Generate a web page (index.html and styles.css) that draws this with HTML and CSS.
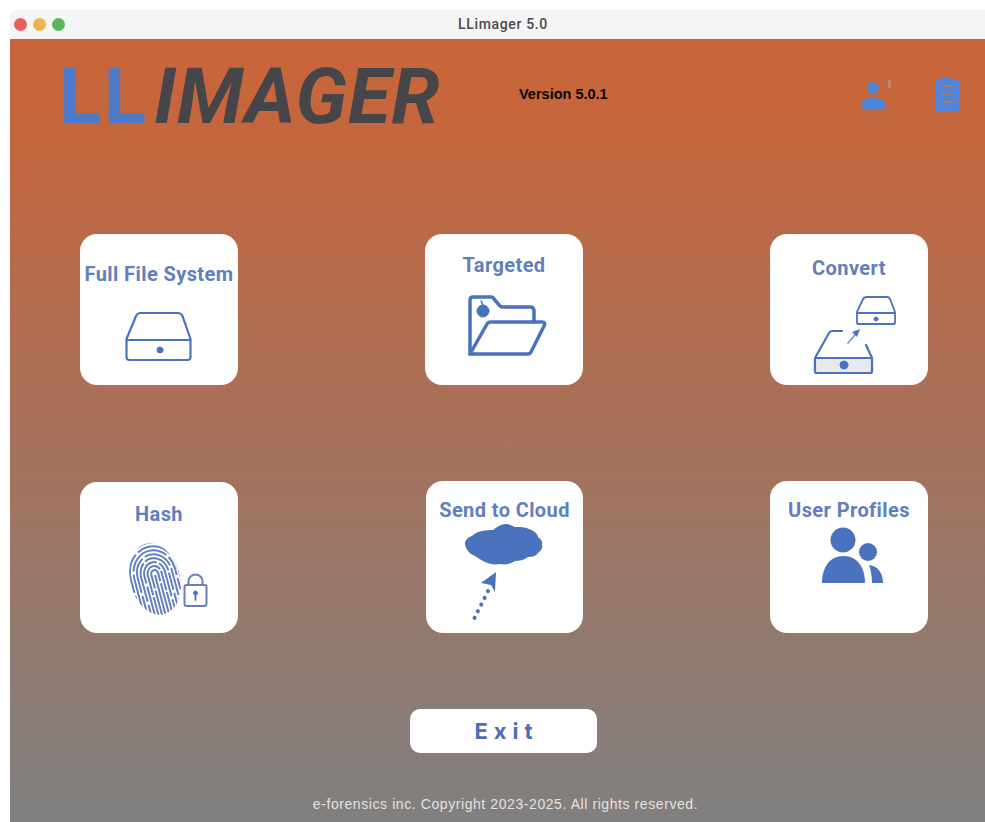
FILE: index.html
```html
<!DOCTYPE html>
<html lang="en">
<head>
<meta charset="utf-8">
<title>LLimager 5.0</title>
<link rel="stylesheet" href="styles.css">
</head>
<body>
<div class="window">
  <div class="titlebar">
    <div class="lights"><i class="light red"></i><i class="light amber"></i><i class="light green"></i></div>
    <div class="title">LLimager 5.0</div>
  </div>
  <main class="app">
    <header class="top">
      <div class="logo"><span class="logo-ll">LL</span><span class="logo-name">IMAGER</span></div>
      <div class="version">Version 5.0.1</div>
      <div class="top-icons">
        <svg class="top-user" viewBox="860 76 32 36" width="32" height="36">
          <circle cx="873" cy="88" r="6" fill="#4f86dc"/>
          <path d="M862 109v-5c0-4 4-6 11-6s12 2 12 6v5z" fill="#4f86dc"/>
          <path d="M888 80h3v8h-3z" fill="#bc8870"/>
        </svg>
        <svg class="top-doc" viewBox="934 76 28 37" width="28" height="37">
          <path d="M937 80h5v-2h9v2h6q2 0 2 2v28q0 2-2 2h-20q-2 0-2-2v-28q0-2 2-2z" fill="#4f86dc"/>
          <path d="M941 85h12v2h-12zM941 93h12v3h-12zM941 101h12v2h-12z" fill="#a9785f"/>
        </svg>
      </div>
    </header>

    <section class="tiles">
      <button class="tile pad-28">
        <span class="tile-label">Full File System</span>
        <svg viewBox="80 286 158 99" width="158" height="99" class="ink-line">
          <path d="M140 313h38q3 0 4.500 3l8 23v18q0 3-3 3h-58q-3 0-3-3v-18l9.500-23q1.500-3 4.500-3z" stroke-width="2.200"/>
          <path d="M127 340h63" stroke-width="2.200"/>
          <circle cx="160" cy="350" r="3" class="fill"/>
        </svg>
      </button>

      <button class="tile pad-19">
        <span class="tile-label">Targeted</span>
        <svg viewBox="425 277 158 108" width="158" height="108" class="ink-line">
          <path d="M470 354v-54q0-3 3-3h18q2 0 3 2l6 7q1 1 3 1h27q4 0 4 4v11" stroke-width="3.500"/>
          <path d="M470 354h58q2 0 3-2l13-26q2-4-2-4h-51q-3 0-4 2z" stroke-width="3.500"/>
          <circle cx="483" cy="311" r="6" class="fill"/>
          <path d="M483 305l-2-4" stroke-width="1.500"/>
        </svg>
      </button>

      <button class="tile pad-22">
        <span class="tile-label">Convert</span>
        <svg viewBox="770 280 158 105" width="158" height="105" class="ink-line">
          <path d="M867 297h20q2 0 3 2l5 13v11q0 1-1 1h-36q-1 0-1-1v-11l6-13q1-2 4-2z" stroke-width="1.800"/>
          <path d="M857 313h38" stroke-width="1.800"/>
          <circle cx="876" cy="319" r="2" class="fill"/>
          <path d="M842 331h-10q-2 0-3 2l-14 25v13q0 2 2 2h53q2 0 2-2v-13l-6-13" stroke-width="2.200"/>
          <path d="M815 358h57v13q0 2-2 2h-53q-2 0-2-2z" fill="#e9e9ea" stroke-width="2.200"/>
          <circle cx="844" cy="365" r="4" class="fill"/>
          <path d="M848 343l7-8" stroke="#7f97ca" stroke-width="1.800"/>
          <path d="M860 329l-8 3 5 5z" class="fill" stroke="none"/>
        </svg>
      </button>

      <button class="tile pad-20">
        <span class="tile-label">Hash</span>
        <svg viewBox="80 526 158 107" width="158" height="107" class="ink-line">
          <defs>
            <clipPath id="print-edge"><ellipse cx="155" cy="579" rx="25" ry="36.500" transform="rotate(-15 155 579)"/></clipPath>
          </defs>
          <g clip-path="url(#print-edge)">
            <g class="ridges" transform="rotate(-15 155 575)">
              <path d="M155 615v-40"/>
              <path d="M151.500 620v-46a3.500 4 0 0 1 7 0v46" stroke-dasharray="30 2 34 2"/>
              <path d="M148 620v-46a7 8 0 0 1 14 0v46" stroke-dasharray="24 2 40 2 20 2"/>
              <path d="M144.500 620v-46a10.500 12 0 0 1 21 0v46" stroke-dasharray="36 3 30 2"/>
              <path d="M141 620v-46a14 16 0 0 1 28 0v46" stroke-dasharray="18 3 40 2 30 2"/>
              <path d="M137.500 620v-46a17.500 20 0 0 1 35 0v46" stroke-dasharray="28 3 36 3 30 3"/>
              <path d="M134 620v-46a21 24 0 0 1 42 0v46" stroke-dasharray="12 3 36 3 46 3 20 3"/>
              <path d="M130.500 620v-46a24.500 28 0 0 1 49 0v46" stroke-dasharray="30 3 40 3 36 3"/>
              <path d="M127 620v-46a28 32 0 0 1 56 0v46"/>
            </g>
          </g>
          <path d="M186.500 585h18q2 0 2 2v17q0 2-2 2h-18q-2 0-2-2v-17q0-2 2-2z" stroke="#6a7fb8" stroke-width="2"/>
          <path d="M188.500 585v-4a7 6.500 0 0 1 14 0v4" stroke="#6a7fb8" stroke-width="2"/>
          <circle cx="195.500" cy="593" r="2" class="fill"/>
          <path d="M195.500 594v6" stroke-width="1.800"/>
        </svg>
      </button>

      <button class="tile pad-17 nudge">
        <span class="tile-label">Send to Cloud</span>
        <svg viewBox="425 522 158 110" width="158" height="110" class="ink-line">
          <path class="fill" stroke="none" d="M465 544c0-4 3-7 7-8 3-3 6-4 10-5 4-1 8-1 11-1 4-3 8-6 13-6 4 0 6 2 9 3 5 0 10 0 14 2 5 2 8 4 9 8 3 2 5 5 4 8 1 3-1 6-4 8-2 3-6 4-10 4-4 3-9 4-13 4-4 3-10 4-15 3-5 1-11 0-15-2-4-2-7-4-10-6-5-2-9-6-10-12z"/>
          <path d="M474.500 618l15-30" stroke-width="4" stroke-linecap="round" stroke-dasharray="0.100 7.400"/>
          <path class="fill" stroke="none" d="M496 572l-1 20-4-7-10-2z"/>
        </svg>
      </button>

      <button class="tile pad-17">
        <span class="tile-label">User Profiles</span>
        <svg viewBox="770 522 158 110" width="158" height="110" class="ink-line">
          <circle cx="843" cy="540" r="12.500" class="fill" stroke="none"/>
          <path class="fill" stroke="none" d="M822 583c0-16 8-27 21.500-27s21.500 11 21.500 27z"/>
          <circle cx="868" cy="552" r="9" class="fill" stroke="none"/>
          <path class="fill" stroke="none" d="M869 565c9 1 14 8 14 18h-11c0-7-1-12-3-18z"/>
        </svg>
      </button>
    </section>

    <button class="exit">Exit</button>
    <footer class="copyright">e-forensics inc. Copyright 2023-2025. All rights reserved.</footer>
  </main>
</div>
</body>
</html>
```

FILE: styles.css
```css
html, body {
  margin: 0;
  height: 100%;
  background: #fff;
  overflow: hidden;
}

body {
  padding: 10px 0 0 10px;
  box-sizing: border-box;
  font-family: "Liberation Sans", Arial, sans-serif;
}

.window {
  height: 812px;
  display: flex;
  flex-direction: column;
  border-top-left-radius: 6px;
  overflow: hidden;
}

.titlebar {
  flex: none;
  height: 29px;
  background: #f5f5f5;
  position: relative;
  display: flex;
  align-items: center;
  justify-content: center;
}

.lights {
  position: absolute;
  left: 4px;
  top: 8px;
  display: flex;
  gap: 6px;
}

.light {
  width: 13px;
  height: 13px;
  border-radius: 50%;
}

.red { background: #e4605c; }
.amber { background: #ecb64c; }
.green { background: #5cb55a; }

.title {
  font-family: Roboto, sans-serif;
  font-weight: 500;
  font-size: 14px;
  letter-spacing: 0.65px;
  color: #4a4a4a;
  margin: 0 0 2px 11px;
}

.app {
  flex: 1;
  display: flex;
  flex-direction: column;
  background: linear-gradient(#c9653a 0, #c7653b 60px, #808080 100%);
}

.top {
  flex: none;
  height: 195px;
  display: flex;
  align-items: flex-start;
  position: relative;
}

.logo {
  margin: 18px 0 0 50px;
  display: flex;
  height: 80px;
  line-height: 80px;
  font-family: Roboto, sans-serif;
  font-size: 78px;
  white-space: nowrap;
}

.logo-ll {
  color: #4f7ac8;
  font-weight: 700;
  width: 94px;
  letter-spacing: 2.600px;
  margin-left: -1px;
  margin-right: 1px;
}

.logo-name {
  color: #46464a;
  font-weight: 700;
  font-style: italic;
  letter-spacing: 0.800px;
}

.version {
  position: absolute;
  left: 509px;
  top: 47px;
  font-size: 14.500px;
  font-weight: 700;
  color: #0c0402;
}

.top-icons {
  position: absolute;
  left: 850px;
  top: 37px;
  display: flex;
  gap: 42px;
}

.tiles {
  flex: none;
  display: grid;
  grid-template-columns: repeat(3, 158px);
  grid-auto-rows: 151px;
  column-gap: 187px;
  row-gap: 97px;
  padding-left: 70px;
}

.tile {
  border: 0;
  margin: 0;
  background: #fff;
  border-radius: 17px;
  display: flex;
  flex-direction: column;
  align-items: center;
  overflow: hidden;
  padding: 0;
  font: inherit;
}

.pad-17 { padding-top: 17px; margin-top: -1px; }
.pad-19 { padding-top: 19px; }
.pad-20 { padding-top: 20px; }
.pad-22 { padding-top: 22px; }
.pad-28 { padding-top: 28px; }

.nudge { margin-left: 1px; width: 157px; }
.nudge svg { margin-left: -1px; }

.tile-label {
  flex: none;
  height: 24px;
  line-height: 24px;
  font-family: Roboto, sans-serif;
  font-weight: 700;
  font-size: 20px;
  color: #5f80bd;
  white-space: nowrap;
  letter-spacing: 0.4px;
}

.tile svg {
  flex: none;
  display: block;
}

.ink-line {
  fill: none;
  stroke: #4a72bd;
  stroke-linecap: round;
  stroke-linejoin: round;
}

.ink-line .fill { fill: #4a72bd; }

.ridges {
  stroke: #6480bd;
  stroke-width: 2;
  stroke-linecap: butt;
}

.exit {
  flex: none;
  align-self: flex-start;
  margin: 76px 0 0 400px;
  width: 187px;
  height: 44px;
  border: 0;
  border-radius: 10px;
  background: #fff;
  color: #4a6fb5;
  font-family: Inter, sans-serif;
  font-weight: 700;
  font-size: 22px;
  letter-spacing: 6px;
  padding: 0 0 0 6px;
}

.copyright {
  margin-top: auto;
  padding: 0 0 10px 16px;
  text-align: center;
  font-size: 14px;
  color: #e6e2de;
  letter-spacing: 0.58px;
}
```
